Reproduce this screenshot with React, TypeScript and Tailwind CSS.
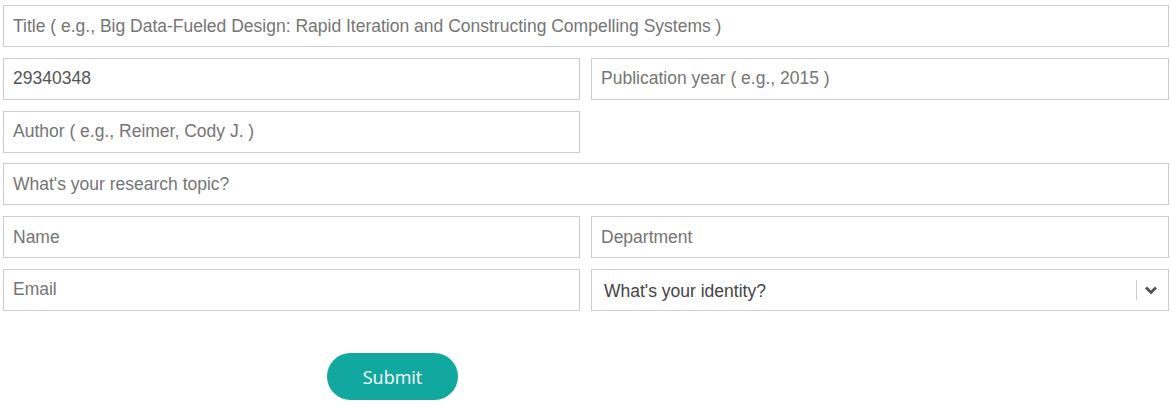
import React from "react";

const inputCls =
  "h-[42px] w-full border border-[#cccccc] bg-white px-[9px] text-[17.5px] text-[#555555] placeholder:text-[#757575] outline-none";

const row = "grid grid-cols-[577px_578px] gap-[11px]";

export default function App() {
  return (
    <div
      className="w-[1171px] h-[407px] bg-white px-[3px] pt-[5px]"
      style={{ fontFamily: '"Liberation Sans", Arial, sans-serif' }}
    >
      <div className="flex flex-col gap-[10.8px] w-[1166px]">
        <input
          className={inputCls}
          placeholder="Title ( e.g., Big Data-Fueled Design: Rapid Iteration and Constructing Compelling Systems )"
        />
        <div className={row}>
          <input className={inputCls} defaultValue="29340348" />
          <input className={inputCls} placeholder="Publication year ( e.g., 2015 )" />
        </div>
        <div className={row}>
          <input className={inputCls} placeholder="Author ( e.g., Reimer, Cody J. )" />
          <div />
        </div>
        <input className={inputCls} placeholder="What's your research topic?" />
        <div className={row}>
          <input className={inputCls} placeholder="Name" />
          <input className={inputCls} placeholder="Department" />
        </div>
        <div className={row}>
          <input className={inputCls} placeholder="Email" />
          <div className="h-[42px] border border-[#cccccc] bg-white flex items-center pl-[12px] pr-[10px]">
            <span className="flex-1 text-[17.5px] text-[#444444] pt-[2px]">What's your identity?</span>
            <span className="h-[20px] w-px bg-[#cccccc] mr-[7px]" />
            <svg width="14" height="12" viewBox="0 0 14 12">
              <path d="M2 3.5 L7 8.5 L12 3.5" fill="none" stroke="#555555" strokeWidth="3" />
            </svg>
          </div>
        </div>
      </div>
      <div className="pl-[324px] pt-[42px]">
        <button
          className="h-[47px] w-[131px] rounded-full bg-[#11a89f] text-white text-[18px] pt-[2px]"
          style={{ fontFamily: '"Open Sans", "Noto Sans", sans-serif' }}
        >
          Submit
        </button>
      </div>
    </div>
  );
}
